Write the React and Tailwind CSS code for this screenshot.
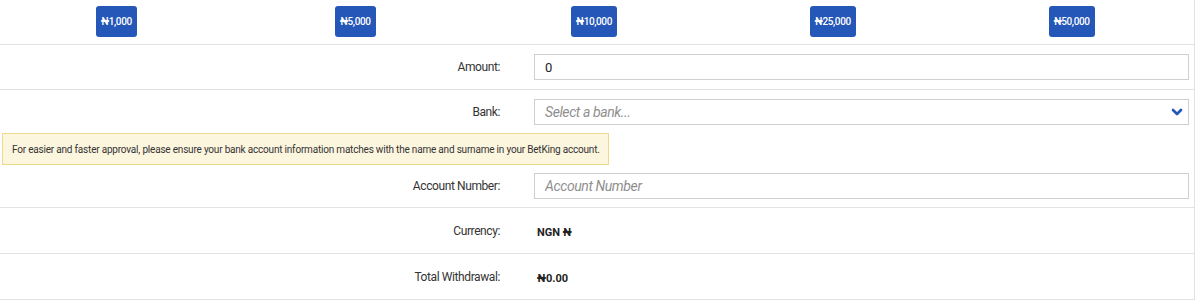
import React, { useState } from 'react'
import { ChevronDown } from 'lucide-react'

const amounts = ['₦1,000', '₦5,000', '₦10,000', '₦25,000', '₦50,000']

const Row = ({ label, children, className = '' }) => (
  <div className={'flex items-center border-b border-[#e3e3e3] ' + className}>
    <div className="w-[500px] text-right text-[12px] text-[#333] tracking-[-0.4px]">{label}</div>
    <div className="ml-[34px] mr-[5px] flex-1">{children}</div>
  </div>
)

const App = () => {
  const [amount, setAmount] = useState('0')

  return (
    <div className="w-[1195px] bg-white border-r border-[#e3e3e3] font-['Roboto',sans-serif]">
      {/* quick amounts */}
      <div className="grid grid-cols-5 h-[45px] pt-[6px] border-b border-[#e3e3e3]">
        {amounts.map((a) => (
          <div key={a} className="flex justify-center pr-[6px]">
            <button className="h-[31px] px-[5px] rounded-[3px] bg-[#2557b9] text-white text-[10px] font-medium tracking-[-0.4px]">
              {a}
            </button>
          </div>
        ))}
      </div>

      <Row label="Amount:" className="h-[45px]">
        <input
          value={amount}
          onChange={(e) => setAmount(e.target.value)}
          className="w-full h-[26px] border border-[#cfcfcf] px-[10px] text-[13px] text-[#222] outline-none"
        />
      </Row>

      {/* bank + account */}
      <div className="border-b border-[#e3e3e3] pt-[9px] pb-[8px]">
        <div className="flex items-center">
          <div className="w-[500px] text-right text-[12px] text-[#333] tracking-[-0.4px]">Bank:</div>
          <div className="ml-[34px] mr-[5px] flex-1">
            <div className="h-[26px] border border-[#cfcfcf] pl-[10px] pr-[3px] flex items-center justify-between">
              <span className="text-[14px] italic text-[#8f8f8f] tracking-[-0.4px]">Select a bank...</span>
              <ChevronDown size={16} strokeWidth={4} className="text-[#2557b9]" />
            </div>
          </div>
        </div>

        <div className="ml-[2px] mt-[8px] w-[607px] h-[32px] flex items-center px-[9px] bg-[#fdf6df] border border-[#f1d98a] text-[10px] text-[#333] whitespace-nowrap tracking-[-0.2px]">
          For easier and faster approval, please ensure your bank account information matches with the name and surname in your BetKing account.
        </div>

        <div className="flex items-center mt-[8px]">
          <div className="w-[500px] text-right text-[12px] text-[#333] tracking-[-0.4px]">Account Number:</div>
          <div className="ml-[34px] mr-[5px] flex-1">
            <input
              placeholder="Account Number"
              className="w-full h-[26px] border border-[#cfcfcf] px-[10px] text-[14px] italic tracking-[-0.4px] placeholder:text-[#8f8f8f] outline-none"
            />
          </div>
        </div>
      </div>

      <Row label="Currency:" className="h-[46px]">
        <span className="ml-[3px] text-[11px] font-bold text-[#222]">NGN ₦</span>
      </Row>

      <Row label="Total Withdrawal:" className="h-[46px]">
        <span className="ml-[3px] text-[11px] font-bold text-[#222]">₦0.00</span>
      </Row>
    </div>
  )
}

export default App
